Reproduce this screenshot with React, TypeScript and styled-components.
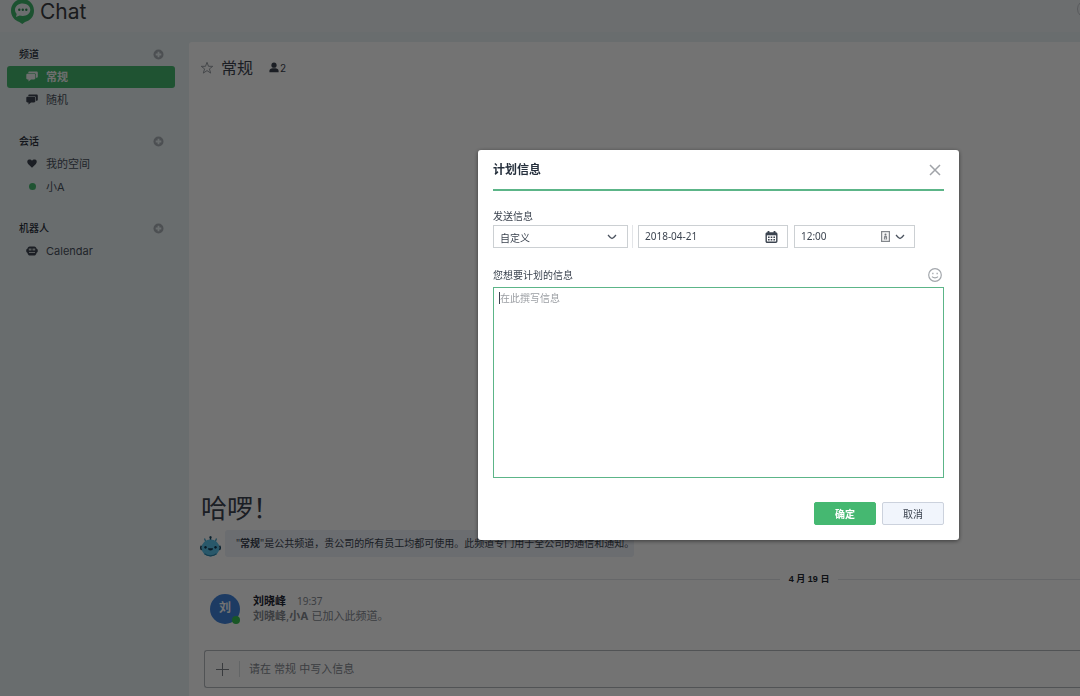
import React from "react";
import styled, { createGlobalStyle, css } from "styled-components";

const cjk = `"Noto Sans CJK SC", sans-serif`;

const GlobalStyle = createGlobalStyle`
  *, *::before, *::after { box-sizing: border-box; }
  body {
    margin: 0;
    overflow: hidden;
    font-family: Inter, ${cjk};
    font-size: 11px;
    color: #3c4450;
  }
  button, input, select, textarea { font: inherit; color: inherit; margin: 0; }
  button { padding: 0; border: 0; background: none; cursor: pointer; }
  h1, h2, h3, p, ul { margin: 0; padding: 0; }
  ul { list-style: none; }
  svg { display: block; flex: none; }
`;

const Page = styled.div`
  display: flex;
  flex-direction: column;
  height: 100vh;
  background: #e9f1f3;
`;

const TopBar = styled.header`
  display: flex;
  justify-content: space-between;
  height: 32px;
  padding-left: 10px;
  background: #f0f3f6;
  overflow: hidden;
`;

const Brand = styled.a`
  display: flex;
  gap: 5px;
  height: 24px;
  color: #3a3d42;
  font-size: 21px;
  line-height: 23px;
  text-decoration: none;
`;

const AccountButton = styled.button`
  width: 18px;
  height: 18px;
  margin-right: -15px;
  border: 1px solid #c4c8ce;
  border-radius: 50%;
`;

const Body = styled.div`
  display: flex;
  flex: 1;
  min-height: 0;
  padding-top: 10px;
`;

const Sidebar = styled.nav`
  display: flex;
  flex-direction: column;
  flex: none;
  gap: 18px;
  width: 189px;
  padding: 0 14px 0 7px;
`;

const GroupHead = styled.div`
  display: flex;
  align-items: center;
  justify-content: space-between;
  height: 24px;
  padding: 0 11px 0 12px;
`;

const GroupTitle = styled.h3`
  font-size: 10px;
  font-weight: 500;
  line-height: 14px;
  color: #2b323d;
`;

const AddButton = styled.button`
  color: #a9b0b6;
`;

const RoomList = styled.ul`
  display: flex;
  flex-direction: column;
  gap: 1px;
`;

const RoomLink = styled.a<{ $active?: boolean }>`
  display: flex;
  align-items: center;
  gap: 8px;
  height: 22px;
  padding: 0 0 1px 19px;
  border-radius: 3px;
  line-height: 16px;
  color: #4a525e;
  text-decoration: none;
  ${(p) =>
    p.$active &&
    css`
      background: #45b86f;
      color: #f4f6f7;
      font-weight: 700;
    `}
`;

const IconSlot = styled.span<{ $light?: boolean }>`
  display: flex;
  justify-content: center;
  width: 12px;
  color: ${(p) => (p.$light ? "#f4f6f7" : "#3c4450")};
`;

const OnlineDot = styled.span`
  width: 7px;
  height: 7px;
  border-radius: 50%;
  background: #45b86f;
`;

const Main = styled.main`
  display: flex;
  flex-direction: column;
  flex: 1;
  min-width: 0;
  padding: 12px 0 8px 11px;
  background: #fff;
  border-top-left-radius: 3px;
`;

const RoomHeader = styled.div`
  display: flex;
  align-items: center;
  gap: 7px;
  height: 27px;
`;

const StarButton = styled.button`
  color: #9a9fa6;
`;

const RoomTitle = styled.h1`
  font-size: 16px;
  font-weight: 400;
  line-height: 24px;
`;

const Members = styled.button`
  display: flex;
  align-items: center;
  gap: 1px;
  margin-left: 9px;
  font-size: 10px;
  line-height: 14px;
`;

const Timeline = styled.section`
  display: flex;
  flex-direction: column;
  flex: 1;
  justify-content: flex-end;
`;

const Greeting = styled.h2`
  padding-left: 1px;
  font-size: 26px;
  font-weight: 400;
  line-height: 42px;
`;

const Notice = styled.div`
  display: flex;
  align-items: flex-end;
  gap: 4px;
`;

const NoticeText = styled.p`
  height: 27px;
  padding-left: 11px;
  border-radius: 3px;
  background: #edf1f8;
  font-family: "Noto Sans", ${cjk};
  font-size: 10px;
  line-height: 26px;
  white-space: nowrap;
`;

const DateRule = styled.div`
  display: flex;
  align-items: center;
  gap: 9px;
  margin-top: 15px;
  font-family: "Liberation Sans", ${cjk};
  font-size: 9px;
  font-weight: 700;
  line-height: 14px;
  color: #22272f;
`;

const Rule = styled.span<{ $grow: number }>`
  flex: ${(p) => p.$grow} 1 0;
  height: 1px;
  background: #e3e5e8;
`;

const Message = styled.article`
  display: flex;
  gap: 13px;
  padding: 8px 0 26px 10px;
`;

const Avatar = styled.div`
  position: relative;
  width: 30px;
  height: 30px;
  border-radius: 50%;
  background: #4284dc;
  color: #fff;
  font-size: 12px;
  font-weight: 700;
  line-height: 28px;
  text-align: center;
`;

const Presence = styled.span`
  position: absolute;
  right: 0;
  bottom: 0;
  width: 8px;
  height: 8px;
  border-radius: 50%;
  background: #38c256;
`;

const MessageBody = styled.div`
  line-height: 15px;
  color: #858a91;
`;

const Author = styled.strong`
  margin-right: 11px;
  color: #1f2733;
`;

const Time = styled.time`
  font-family: "Noto Sans", ${cjk};
  font-size: 10px;
`;

const Composer = styled.div`
  display: flex;
  align-items: center;
  height: 38px;
  margin-left: 4px;
  padding-left: 11px;
  border: 1px solid #b4b8bd;
  border-right: 0;
  border-radius: 3px 0 0 3px;
`;

const ComposerInput = styled.input`
  flex: 1;
  height: 16px;
  margin-left: 10px;
  padding: 0 0 0 9px;
  border: 0;
  border-left: 1px solid #dcdfe2;
  outline: 0;
  background: none;
  line-height: 16px;
  &::placeholder {
    color: #858a91;
    opacity: 1;
  }
`;

const Scrim = styled.div`
  position: fixed;
  inset: 0;
  display: flex;
  align-items: flex-start;
  justify-content: flex-end;
  padding: 150px 121px 0;
  background: rgba(0, 0, 0, 0.55);
`;

const Dialog = styled.form`
  width: 100%;
  max-width: 481px;
  padding: 0 15px 15px;
  border-radius: 3px;
  background: #fff;
  box-shadow: 0 1px 4px rgba(0, 0, 0, 0.5);
  font-family: "Noto Sans", ${cjk};
  font-size: 10px;
  line-height: 14px;
`;

const DialogHead = styled.div`
  display: flex;
  align-items: center;
  justify-content: space-between;
  height: 41px;
  padding-right: 3px;
  border-bottom: 2px solid #5cb588;
`;

const DialogTitle = styled.h2`
  font-size: 12px;
  line-height: 18px;
  color: #26303d;
`;

const CloseButton = styled.button`
  color: #a0a3a8;
`;

const Label = styled.label`
  display: block;
`;

const ScheduleField = styled.div`
  padding-top: 18px;
`;

const ScheduleRow = styled.div`
  display: flex;
  margin-top: 2px;
`;

const Control = styled.div<{ $width: number }>`
  position: relative;
  display: flex;
  align-items: center;
  gap: 5px;
  width: ${(p) => p.$width}px;
  height: 23px;
  padding-right: 9px;
  border: 1px solid #ccd0d3;
`;

const controlText = css`
  flex: 1;
  min-width: 0;
  width: 100%;
  height: 21px;
  padding: 0 6px;
  border: 0;
  outline: 0;
  background: transparent;
  line-height: 21px;
`;

const Select = styled.select`
  ${controlText}
  appearance: none;
  padding-top: 2px;
`;

const TextInput = styled.input`
  ${controlText}
`;

const Divider = styled.span`
  width: 1px;
  margin: 0 5px 0 4px;
  background: #e3e5e8;
`;

const DateTime = styled.div`
  display: flex;
  gap: 6px;
`;

const MessageHead = styled.div`
  display: flex;
  align-items: flex-end;
  justify-content: space-between;
  height: 39px;
  padding: 0 2px 5px 0;
`;

const EmojiButton = styled.button`
  color: #a3a7ac;
`;

const Editor = styled.div`
  position: relative;
  border: 1px solid #5cb588;
`;

const TextArea = styled.textarea`
  display: block;
  width: 100%;
  height: 189px;
  padding: 3px 6px;
  border: 0;
  outline: 0;
  resize: none;
  line-height: 14px;
  caret-color: transparent;
  &::placeholder {
    color: #9b9ea3;
    opacity: 1;
  }
`;

const Caret = styled.span`
  position: absolute;
  top: 4px;
  left: 5px;
  width: 1px;
  height: 12px;
  background: #3c4450;
`;

const Actions = styled.div`
  display: flex;
  justify-content: flex-end;
  gap: 6px;
  margin-top: 24px;
`;

const Button = styled.button<{ $primary?: boolean }>`
  width: 62px;
  height: 23px;
  border: 1px solid ${(p) => (p.$primary ? "#45b871" : "#ccd2dd")};
  border-radius: 2px;
  background: ${(p) => (p.$primary ? "#45b871" : "#f1f5fc")};
  color: ${(p) => (p.$primary ? "#fff" : "#3c4450")};
  font-weight: ${(p) => (p.$primary ? 700 : 400)};
  line-height: 16px;
`;

const LogoMark = () => (
  <svg width="25" height="25" viewBox="0 0 25 25" aria-hidden="true">
    <path d="M12.500-1C5.800-1 1 4.300 1 10.700c0 5.500 3.500 9.700 8.300 11.200L12.300 24l2.700-2.100c5.400-1.200 9-5.700 9-11.200C24 4.300 19.200-1 12.500-1Z" fill="#3fb56c" />
    <path d="M12.700 3.500c-4.300 0-7.700 2.700-7.700 6.300 0 1.700.6 3 1.700 4.100L6 17l3.700-1.500c.9.300 1.900.5 3 .5 4.300 0 7.600-2.700 7.600-6.200s-3.300-6.300-7.600-6.300Z" fill="#f0f3f6" />
    <g fill="#2f8f55">
      <circle cx="9.300" cy="9.800" r="1.200" />
      <circle cx="12.800" cy="9.800" r="1.200" />
      <circle cx="16.300" cy="9.800" r="1.200" />
    </g>
  </svg>
);

const PlusCircleIcon = () => (
  <svg width="11" height="11" viewBox="0 0 11 11" aria-hidden="true">
    <circle cx="5.500" cy="5.500" r="5" fill="currentColor" />
    <path d="M5.500 2.700v5.600M2.700 5.500h5.600" stroke="#e9f1f3" strokeWidth="1.800" />
  </svg>
);

const ChatsIcon = () => (
  <svg width="12" height="11" viewBox="0 0 12 11" fill="currentColor" aria-hidden="true">
    <path d="M3.500.5h7c.8 0 1.300.5 1.300 1.300v3.700c0 .8-.5 1.300-1.300 1.300h-.6V3.700c0-.9-.6-1.500-1.500-1.500H2.300v-.4c0-.8.400-1.300 1.200-1.300Z" />
    <path d="M1.500 2.800h6.600c.7 0 1.200.5 1.200 1.200v3.200c0 .7-.5 1.200-1.200 1.200H5L2.500 10.600V8.400h-1C.8 8.400.3 7.900.3 7.200V4c0-.7.5-1.200 1.200-1.200Z" />
  </svg>
);

const HeartIcon = () => (
  <svg width="10" height="9" viewBox="0 0 10 9" fill="currentColor" aria-hidden="true">
    <path d="M5 8.700 1.100 4.900C-.2 3.500.1 1.500 1.300.8 2.600 0 4.200.4 5 1.800 5.800.4 7.400 0 8.700.8c1.200.7 1.500 2.700.2 4.100Z" />
  </svg>
);

const BotIcon = () => (
  <svg width="12" height="10" viewBox="0 0 12 10" aria-hidden="true">
    <path d="M3.800.5h4.400c1.400 0 2.200 1 2.400 2.300.8.200 1.200.8 1.200 1.900s-.4 1.800-1.200 2C10.300 8.600 9.300 9.500 8 9.500H4c-1.300 0-2.300-.9-2.600-2.800-.8-.2-1.200-.9-1.200-2s.4-1.700 1.200-1.900C1.600 1.500 2.400.5 3.800.5Z" fill="currentColor" />
    <path d="M2.800 2.600h2.700v1.800H2.800zM6.500 2.600h2.700v1.800H6.500zM3 5.900h6v1H3z" fill="#c3cacd" />
  </svg>
);

const StarIcon = () => (
  <svg width="14" height="14" viewBox="0 0 14 14" fill="none" stroke="currentColor" strokeLinejoin="round" aria-hidden="true">
    <path d="m7 1.300 1.500 4h4.300L9.400 7.900l1.300 4.200L7 9.600l-3.700 2.500 1.300-4.200L1.200 5.300h4.300Z" />
  </svg>
);

const PersonIcon = () => (
  <svg width="10" height="11" viewBox="0 0 10 11" fill="currentColor" aria-hidden="true">
    <circle cx="5" cy="3.200" r="2.600" />
    <path d="M.4 10.200V8.800C.4 7.300 2 6.700 3.600 6.300h2.800c1.600.4 3.200 1 3.200 2.500v1.400Z" />
  </svg>
);

const RobotAvatar = () => (
  <svg width="21" height="21" viewBox="0 0 21 21" aria-hidden="true">
    <path d="M10.500.5v5" stroke="#174a66" strokeWidth="1.500" />
    <circle cx="10.500" cy="1.300" r="1.100" fill="#174a66" />
    <path d="M4.500 2.500 5.800 6M16.500 2.500 15.200 6" stroke="#3b9cc4" strokeWidth="1.200" />
    <ellipse cx="10.500" cy="12" rx="9" ry="8.500" fill="#5cc3ea" />
    <path d="M1.500 9.700c-1 1-1 3.200.2 4.200M19.500 9.700c1 1 1 3.200-.2 4.200" fill="none" stroke="#174a66" strokeWidth="1.600" />
    <ellipse cx="5.500" cy="11.300" rx="1.200" ry="1.400" fill="#123a52" />
    <ellipse cx="15.500" cy="11.300" rx="1.200" ry="1.400" fill="#123a52" />
    <path d="M8 12.300h5c0 1.500-1 2.200-2.500 2.200S8 13.800 8 12.300Z" fill="#123a52" />
    <path d="M4.500 17.800c3.200 2.700 8.800 2.700 12 0" fill="none" stroke="#2d86ad" strokeWidth="1.200" />
  </svg>
);

const PlusIcon = () => (
  <svg width="13" height="13" viewBox="0 0 13 13" stroke="#7e848b" aria-hidden="true">
    <path d="M6.500 0v13M0 6.500h13" />
  </svg>
);

const CloseIcon = () => (
  <svg width="12" height="12" viewBox="0 0 12 12" stroke="currentColor" strokeWidth="1.500" aria-hidden="true">
    <path d="m1 1 10 10M11 1 1 11" />
  </svg>
);

const ChevronIcon = () => (
  <svg width="10" height="6" viewBox="0 0 10 6" fill="none" stroke="#4a525e" strokeWidth="1.200" aria-hidden="true">
    <path d="M1 1c1.300 1.600 2.800 3 4 3.500C6.200 4 7.700 2.600 9 1" />
  </svg>
);

const SelectArrow = styled.span`
  position: absolute;
  right: 10px;
  pointer-events: none;
`;

const CalendarIcon = () => (
  <svg width="13" height="12" viewBox="0 0 13 12" aria-hidden="true">
    <path d="M3.500 0v3M9.500 0v3" stroke="#3c4450" strokeWidth="1.800" />
    <rect x="1.200" y="2" width="10.600" height="9.300" rx="1" fill="#fff" stroke="#3c4450" strokeWidth="1.400" />
    <path d="M1 2h11v2.300H1z" fill="#3c4450" />
    <path d="M3 6.300h7M3 8.700h7" stroke="#3c4450" strokeWidth="1.400" strokeDasharray="1.600 1.100" />
  </svg>
);

const ContactIcon = () => (
  <svg width="9" height="11" viewBox="0 0 9 11" aria-hidden="true">
    <rect x=".6" y=".6" width="7.800" height="9.800" fill="#f5f5f5" stroke="#83878c" strokeWidth="1.200" />
    <circle cx="4.500" cy="3.500" r="1" fill="#74787d" />
    <path d="M4.500 4.500c-1 0-1.600.8-1.600 2.300v1.700h3.200V6.800c0-1.500-.6-2.300-1.600-2.300Z" fill="#83878c" />
    <path d="M4.500 6.500v2" stroke="#fff" strokeWidth=".6" />
  </svg>
);

const SmileIcon = () => (
  <svg width="14" height="14" viewBox="0 0 14 14" fill="none" stroke="currentColor" strokeWidth="1.200" aria-hidden="true">
    <circle cx="7" cy="7" r="6.300" />
    <path d="M4 8.700c1.500 1.500 4.500 1.500 6 0" />
    <path d="M4.200 5.500h1.300M8.500 5.500h1.300" strokeWidth="1.500" />
  </svg>
);

type Room = { name: string; icon: React.ReactNode; active?: boolean };

const groups: { title: string; rooms: Room[] }[] = [
  {
    title: "频道",
    rooms: [
      { name: "常规", icon: <ChatsIcon />, active: true },
      { name: "随机", icon: <ChatsIcon /> },
    ],
  },
  {
    title: "会话",
    rooms: [
      { name: "我的空间", icon: <HeartIcon /> },
      { name: "小A", icon: <OnlineDot /> },
    ],
  },
  { title: "机器人", rooms: [{ name: "Calendar", icon: <BotIcon /> }] },
];

export default function App() {
  return (
    <Page lang="zh-CN">
      <GlobalStyle />
      <TopBar>
        <Brand href="#">
          <LogoMark />
          Chat
        </Brand>
        <AccountButton type="button" aria-label="账户" />
      </TopBar>
      <Body>
        <Sidebar>
          {groups.map((group) => (
            <div key={group.title}>
              <GroupHead>
                <GroupTitle>{group.title}</GroupTitle>
                <AddButton type="button" aria-label={`添加${group.title}`}>
                  <PlusCircleIcon />
                </AddButton>
              </GroupHead>
              <RoomList>
                {group.rooms.map((room) => (
                  <li key={room.name}>
                    <RoomLink href="#" $active={room.active}>
                      <IconSlot $light={room.active}>{room.icon}</IconSlot>
                      {room.name}
                    </RoomLink>
                  </li>
                ))}
              </RoomList>
            </div>
          ))}
        </Sidebar>
        <Main>
          <RoomHeader>
            <StarButton type="button" aria-label="收藏">
              <StarIcon />
            </StarButton>
            <RoomTitle>常规</RoomTitle>
            <Members type="button">
              <PersonIcon />2
            </Members>
          </RoomHeader>
          <Timeline>
            <Greeting>哈啰！</Greeting>
            <Notice>
              <RobotAvatar />
              <NoticeText>
                "<strong>常规</strong>"是公共频道，贵公司的所有员工均都可使用。此频道专门用于全公司的通信和通知。
              </NoticeText>
            </Notice>
            <DateRule>
              <Rule $grow={12} />
              4 月 19 日
              <Rule $grow={5} />
            </DateRule>
            <Message>
              <Avatar>
                刘
                <Presence />
              </Avatar>
              <MessageBody>
                <div>
                  <Author>刘晓峰</Author>
                  <Time>19:37</Time>
                </div>
                <p>
                  <strong>刘晓峰</strong>,<strong>小A</strong> 已加入此频道。
                </p>
              </MessageBody>
            </Message>
          </Timeline>
          <Composer>
            <button type="button" aria-label="添加附件">
              <PlusIcon />
            </button>
            <ComposerInput aria-label="信息" placeholder="请在 常规 中写入信息" />
          </Composer>
        </Main>
      </Body>
      <Scrim>
        <Dialog role="dialog" aria-labelledby="dialog-title" onSubmit={(e) => e.preventDefault()}>
          <DialogHead>
            <DialogTitle id="dialog-title">计划信息</DialogTitle>
            <CloseButton type="button" aria-label="关闭">
              <CloseIcon />
            </CloseButton>
          </DialogHead>
          <ScheduleField>
            <Label htmlFor="preset">发送信息</Label>
            <ScheduleRow>
              <Control $width={135}>
                <Select id="preset" defaultValue="custom">
                  <option value="custom">自定义</option>
                </Select>
                <SelectArrow>
                  <ChevronIcon />
                </SelectArrow>
              </Control>
              <Divider />
              <DateTime>
                <Control $width={150}>
                  <TextInput aria-label="日期" defaultValue="2018-04-21" />
                  <button type="button" aria-label="选择日期">
                    <CalendarIcon />
                  </button>
                </Control>
                <Control $width={121}>
                  <TextInput aria-label="时间" defaultValue="12:00" />
                  <ContactIcon />
                  <button type="button" aria-label="选择时间">
                    <ChevronIcon />
                  </button>
                </Control>
              </DateTime>
            </ScheduleRow>
          </ScheduleField>
          <MessageHead>
            <Label htmlFor="message">您想要计划的信息</Label>
            <EmojiButton type="button" aria-label="表情">
              <SmileIcon />
            </EmojiButton>
          </MessageHead>
          <Editor>
            <TextArea id="message" placeholder="在此撰写信息" />
            <Caret />
          </Editor>
          <Actions>
            <Button type="submit" $primary>
              确定
            </Button>
            <Button type="button">取消</Button>
          </Actions>
        </Dialog>
      </Scrim>
    </Page>
  );
}
